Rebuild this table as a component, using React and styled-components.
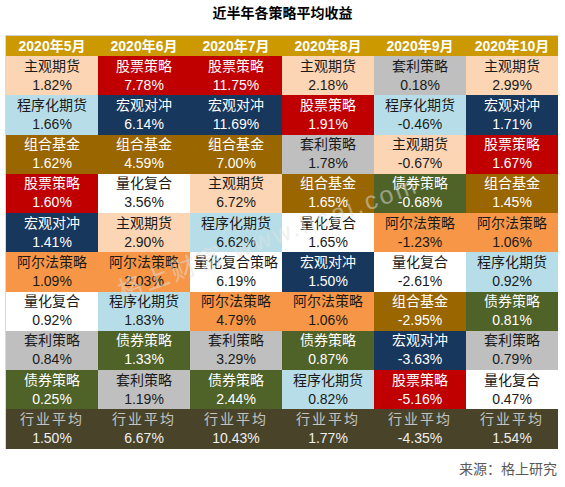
import React from "react";
import styled, { createGlobalStyle } from "styled-components";

const GlobalStyle = createGlobalStyle`
	body {
		margin: 0;
		background: #ffffff;
		font-family: "Liberation Sans", "Noto Sans CJK SC", sans-serif;
	}
`;

const kinds = {
	主观期货: { bg: "#fcd5b4", fg: "#1a1a1a" },
	程序化期货: { bg: "#b7dee8", fg: "#1a1a1a" },
	组合基金: { bg: "#996600", fg: "#ffffff" },
	股票策略: { bg: "#c00000", fg: "#ffffff" },
	宏观对冲: { bg: "#17375d", fg: "#ffffff" },
	阿尔法策略: { bg: "#f79646", fg: "#1a1a1a" },
	量化复合: { bg: "#ffffff", fg: "#1a1a1a" },
	量化复合策略: { bg: "#ffffff", fg: "#1a1a1a" },
	套利策略: { bg: "#bfbfbf", fg: "#1a1a1a" },
	债券策略: { bg: "#4f6228", fg: "#ffffff" },
};

const months = [
	{
		title: "2020年5月",
		rows: [
			["主观期货", "1.82%"],
			["程序化期货", "1.66%"],
			["组合基金", "1.62%"],
			["股票策略", "1.60%"],
			["宏观对冲", "1.41%"],
			["阿尔法策略", "1.09%"],
			["量化复合", "0.92%"],
			["套利策略", "0.84%"],
			["债券策略", "0.25%"],
		],
		avg: "1.50%",
	},
	{
		title: "2020年6月",
		rows: [
			["股票策略", "7.78%"],
			["宏观对冲", "6.14%"],
			["组合基金", "4.59%"],
			["量化复合", "3.56%"],
			["主观期货", "2.90%"],
			["阿尔法策略", "2.03%"],
			["程序化期货", "1.83%"],
			["债券策略", "1.33%"],
			["套利策略", "1.19%"],
		],
		avg: "6.67%",
	},
	{
		title: "2020年7月",
		rows: [
			["股票策略", "11.75%"],
			["宏观对冲", "11.69%"],
			["组合基金", "7.00%"],
			["主观期货", "6.72%"],
			["程序化期货", "6.62%"],
			["量化复合策略", "6.19%"],
			["阿尔法策略", "4.79%"],
			["套利策略", "3.29%"],
			["债券策略", "2.44%"],
		],
		avg: "10.43%",
	},
	{
		title: "2020年8月",
		rows: [
			["主观期货", "2.18%"],
			["股票策略", "1.91%"],
			["套利策略", "1.78%"],
			["组合基金", "1.65%"],
			["量化复合", "1.65%"],
			["宏观对冲", "1.50%"],
			["阿尔法策略", "1.06%"],
			["债券策略", "0.87%"],
			["程序化期货", "0.82%"],
		],
		avg: "1.77%",
	},
	{
		title: "2020年9月",
		rows: [
			["套利策略", "0.18%"],
			["程序化期货", "-0.46%"],
			["主观期货", "-0.67%"],
			["债券策略", "-0.68%"],
			["阿尔法策略", "-1.23%"],
			["量化复合", "-2.61%"],
			["组合基金", "-2.95%"],
			["宏观对冲", "-3.63%"],
			["股票策略", "-5.16%"],
		],
		avg: "-4.35%",
	},
	{
		title: "2020年10月",
		rows: [
			["主观期货", "2.99%"],
			["宏观对冲", "1.71%"],
			["股票策略", "1.67%"],
			["组合基金", "1.45%"],
			["阿尔法策略", "1.06%"],
			["程序化期货", "0.92%"],
			["债券策略", "0.81%"],
			["套利策略", "0.79%"],
			["量化复合", "0.47%"],
		],
		avg: "1.54%",
	},
];

function App() {
	return (
		<Page>
			<GlobalStyle />
			<Title>近半年各策略平均收益</Title>
			<Table>
				{months.map((m) => (
					<Column key={m.title}>
						<Head>{m.title}</Head>
						{m.rows.map(([name, val]) => (
							<Cell key={name} $bg={kinds[name].bg} $fg={kinds[name].fg}>
								<span>{name}</span>
								<span>{val}</span>
							</Cell>
						))}
						<AvgCell>
							<AvgName>行业平均</AvgName>
							<span>{m.avg}</span>
						</AvgCell>
					</Column>
				))}
				<Watermark>格上财富 www.licai.com</Watermark>
			</Table>
			<Source>来源：格上研究</Source>
		</Page>
	);
}

const Page = styled.div`
	width: 565px;
	height: 487px;
	display: flex;
	flex-direction: column;
	overflow: hidden;
`;

const Title = styled.div`
	height: 36px;
	padding-top: 3px;
	box-sizing: border-box;
	text-align: center;
	font-family: "Noto Sans CJK SC", sans-serif;
	font-weight: 700;
	font-size: 14px;
	line-height: 18px;
	color: #000;
`;

const Table = styled.div`
	position: relative;
	margin-left: 5px;
	width: 552px;
	display: flex;
	border-top: 1px solid #d0d0d0;
	border-left: 1px solid #d8d8d8;
	margin-top: -1px;
	overflow: hidden;
`;

const Column = styled.div`
	flex: 1;
	display: flex;
	flex-direction: column;
`;

const Head = styled.div`
	height: 20px;
	background: #cc9900;
	color: #fff;
	font-weight: 700;
	font-size: 14px;
	line-height: 20px;
	text-align: center;
`;

const Cell = styled.div`
	height: 39.25px;
	display: flex;
	flex-direction: column;
	align-items: center;
	justify-content: center;
	background: ${(p) => p.$bg};
	color: ${(p) => p.$fg};
	font-size: 14px;
	line-height: 19px;
	white-space: nowrap;
`;

const AvgCell = styled(Cell)`
	background: #494429;
	color: #eeeeee;
`;

const AvgName = styled.span`
	color: #c4c4c4;
	letter-spacing: 2px;
`;

const Watermark = styled.div`
	position: absolute;
	left: 112px;
	top: 236px;
	transform-origin: left center;
	transform: rotate(-20deg);
	font-size: 25px;
	letter-spacing: 3px;
	color: rgba(225, 225, 225, 0.5);
	white-space: nowrap;
	pointer-events: none;
`;

const Source = styled.div`
	margin-top: 9px;
	padding-right: 8px;
	text-align: right;
	font-family: "Noto Sans CJK SC", sans-serif;
	font-size: 14px;
	line-height: 20px;
	color: #595959;
`;

export default App;
